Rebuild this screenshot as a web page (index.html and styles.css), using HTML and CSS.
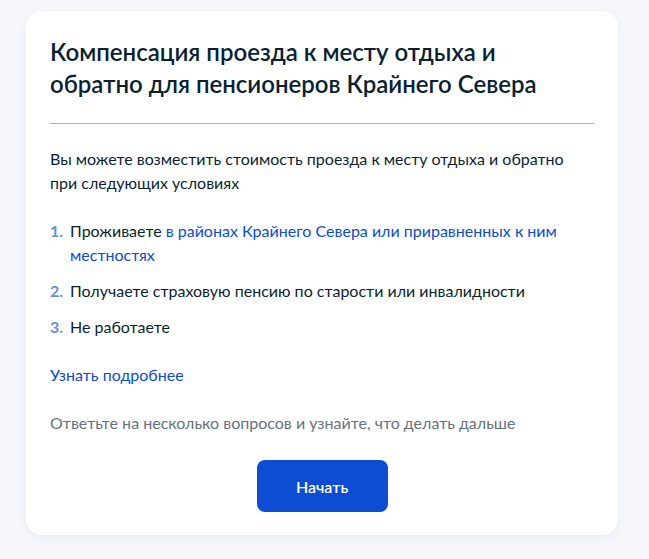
FILE: index.html
```html
<!DOCTYPE html>
<html lang="ru">
<head>
    <meta charset="UTF-8">
    <meta name="viewport" content="width=device-width, initial-scale=1.0">
    <title>Компенсация проезда</title>
    <link rel="stylesheet" href="styles.css">
</head>
<body>
    <div class="card">
        <h1>Компенсация проезда к месту отдыха и обратно для пенсионеров Крайнего Севера</h1>
        <hr class="divider">
        <p class="intro">Вы можете возместить стоимость проезда к месту отдыха и обратно при следующих условиях</p>
        <ol class="conditions">
            <li>Проживаете <a href="#">в районах Крайнего Севера или приравненных к ним местностях</a></li>
            <li>Получаете страховую пенсию по старости или инвалидности</li>
            <li>Не работаете</li>
        </ol>
        <a class="more" href="#">Узнать подробнее</a>
        <p class="hint">Ответьте на несколько вопросов и узнайте, что делать дальше</p>
        <div class="actions">
            <button type="button">Начать</button>
        </div>
    </div>
</body>
</html>
```

FILE: styles.css
```css
/* Page */
body {
    font-family: Lato, "Noto Sans", sans-serif;
    background-color: #f5f7fc;
    color: #0b1f33;
    margin: 0;
    padding: 11px 31px 24px 26px;
}

/* Card */
.card {
    background-color: #fff;
    border-radius: 16px;
    box-shadow: 0 2px 10px rgba(14, 45, 110, 0.06);
    padding: 25px 24px 23px;
}

/* Title */
h1 {
    font-size: 24px;
    line-height: 32px;
    font-weight: 600;
    margin: 0;
    max-width: 500px;
}

.divider {
    border: none;
    border-top: 1px solid #9fb2dd;
    margin: 23px 0 23px;
}

/* Text */
.intro {
    font-size: 16px;
    line-height: 24px;
    margin: 0 0 24px;
}

.conditions {
    list-style: none;
    counter-reset: item;
    margin: 0 0 24px;
    padding: 0;
    display: flex;
    flex-direction: column;
    gap: 12px;
}

.conditions li {
    counter-increment: item;
    position: relative;
    padding-left: 20px;
    font-size: 16px;
    line-height: 24px;
}

.conditions li::before {
    content: counter(item) ".";
    position: absolute;
    left: 0;
    color: #6a8de0;
    font-weight: 700;
}

a {
    color: #0d4cd3;
    text-decoration: none;
}

.more {
    display: block;
    font-size: 16px;
    line-height: 24px;
}

.hint {
    color: #66727f;
    font-size: 16px;
    line-height: 24px;
    margin: 24px 0 25px;
}

/* Button */
.actions {
    display: flex;
    justify-content: center;
}

button {
    width: 131px;
    height: 52px;
    background-color: #0d4cd3;
    color: #fff;
    font-family: inherit;
    font-size: 16px;
    font-weight: 600;
    border: none;
    border-radius: 8px;
    cursor: pointer;
}
```
